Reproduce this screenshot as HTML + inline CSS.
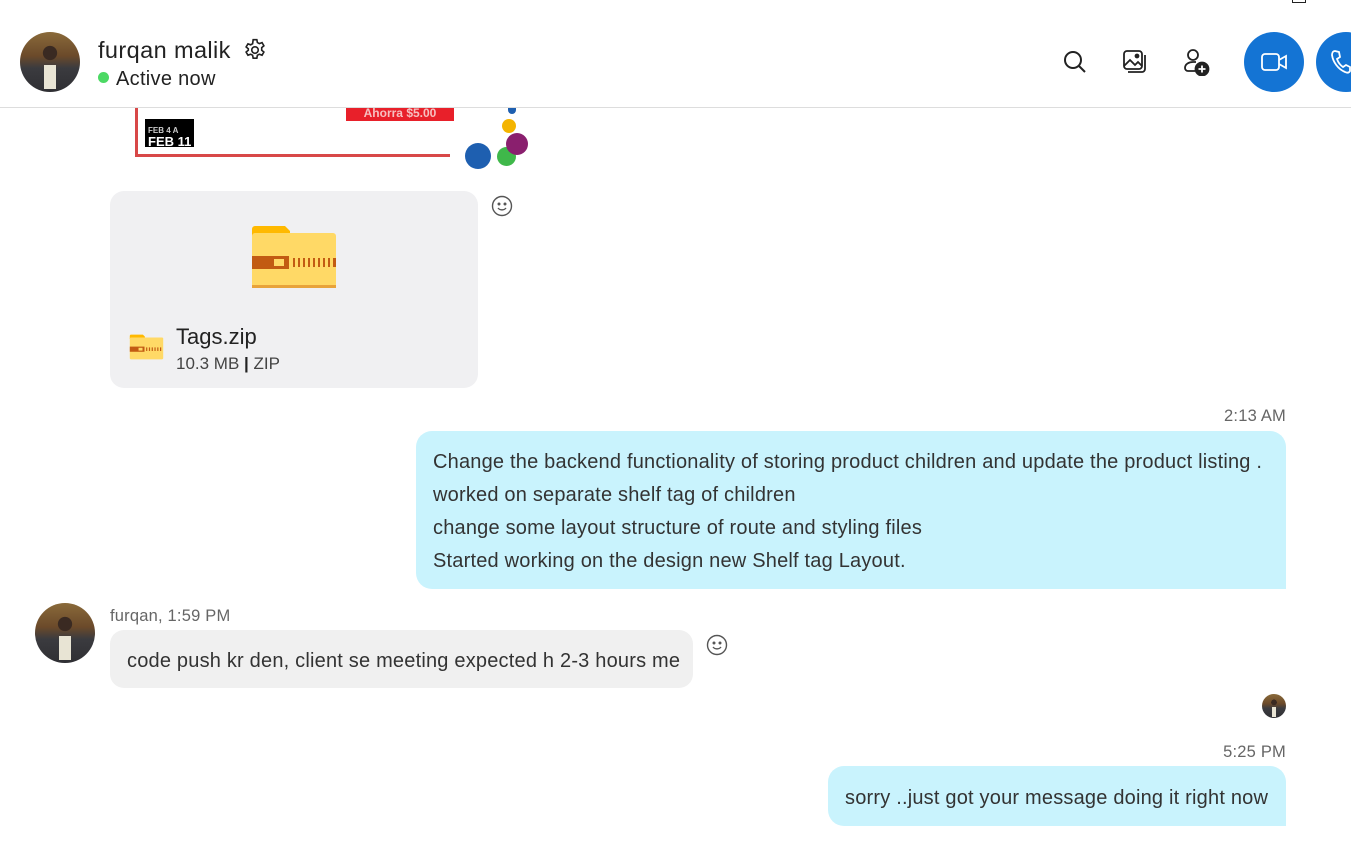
<!DOCTYPE html>
<html><head><meta charset="utf-8"><style>
*{margin:0;padding:0;box-sizing:border-box}
body{width:1351px;height:842px;overflow:hidden;background:#fff;font-family:"Liberation Sans",sans-serif;color:#242424;position:relative}
.abs{position:absolute}
.av{border-radius:50%;background:radial-gradient(circle at 50% 35%,#3a2a22 0 14%,transparent 15%),linear-gradient(180deg,#8a6a3a 0%,#6b4a2a 40%,#3b3b3f 60%,#2f2f33 100%);overflow:hidden}
.av:after{content:"";position:absolute;left:40%;top:55%;width:20%;height:40%;background:#e8e4d4}
.bub{position:absolute;font-size:20px;letter-spacing:.2px;line-height:33px;color:#333}
.time{position:absolute;font-size:16.5px;color:#666;letter-spacing:.2px}
.ib{position:absolute;width:60px;height:60px;border-radius:50%;background:#1474d4}
</style></head><body>
<div class="abs" style="left:1292px;top:-4px;width:14px;height:7px;border:1px solid #222"></div>
<div class="abs av" style="left:20px;top:32px;width:60px;height:60px"></div>
<div class="abs" style="left:98px;top:37px;font-size:23.5px;letter-spacing:.4px;color:#222">furqan malik</div>
<svg class="abs" style="left:242px;top:37px" width="26" height="26" viewBox="0 0 24 24" fill="none" stroke="#222" stroke-width="1.5"><circle cx="12" cy="12" r="3"/><path d="M10.3 2.5h3.4l.5 2.6 1.8 1 2.5-.9 1.7 2.9-2 1.7v2.4l2 1.7-1.7 2.9-2.5-.9-1.8 1-.5 2.6h-3.4l-.5-2.6-1.8-1-2.5.9-1.7-2.9 2-1.7V10.9l-2-1.7 1.7-2.9 2.5.9 1.8-1z"/></svg>
<div class="abs" style="left:98px;top:72px;width:11px;height:11px;border-radius:50%;background:#4cd964"></div>
<div class="abs" style="left:116px;top:68px;font-size:20px;letter-spacing:.3px;color:#222">Active now</div>
<svg class="abs" style="left:1062px;top:49px" width="26" height="26" viewBox="0 0 26 26" fill="none" stroke="#222" stroke-width="2"><circle cx="11" cy="11" r="8"/><path d="M17 17l6 6"/></svg>
<svg class="abs" style="left:1122px;top:49px" width="26" height="26" viewBox="0 0 26 26" fill="none" stroke="#222" stroke-width="1.8"><rect x="2" y="2" width="18" height="18" rx="3"/><path d="M2 17l6-6 5 5 3-3 4 4M23 6v14a3 3 0 0 1-3 3H6"/><circle cx="15" cy="7" r="1.5" fill="#222"/></svg>
<svg class="abs" style="left:1182px;top:48px" width="30" height="28" viewBox="0 0 30 28" fill="none" stroke="#222" stroke-width="1.8"><circle cx="11" cy="7" r="5"/><path d="M13 23H6a3 3 0 0 1-3-3c0-4 4-6 8-6h3"/><circle cx="20" cy="21" r="6.5" fill="#222"/><path d="M20 17.5v7M16.5 21h7" stroke="#fff"/></svg>
<div class="ib" style="left:1244px;top:32px"><svg style="position:absolute;left:17px;top:20px" width="27" height="20" viewBox="0 0 27 20" fill="none" stroke="#fff" stroke-width="1.8"><rect x="1" y="2" width="17" height="16" rx="3"/><path d="M18 8l7-4v12l-7-4"/></svg></div>
<div class="ib" style="left:1316px;top:32px"><svg style="position:absolute;left:14px;top:17px" width="24" height="26" viewBox="0 0 24 26" fill="none" stroke="#fff" stroke-width="1.8"><path d="M5 2l4 1 1 5-3 2c1 3 3 6 6 8l3-2 4 2v4c-1 2-3 2-5 1C8 20 3 13 2 6c0-2 1-4 3-4z"/></svg></div>
<div class="abs" style="left:0;top:107px;width:1351px;height:1px;background:#ddd"></div>
<div class="abs" style="left:135px;top:108px;width:3px;height:49px;background:#d84848"></div>
<div class="abs" style="left:135px;top:154px;width:315px;height:3px;background:#d84848"></div>
<div class="abs" style="left:346px;top:108px;width:108px;height:13px;background:#e8202a;color:#f6c0c0;font-size:12px;font-weight:bold;text-align:center;line-height:10px;overflow:hidden">Ahorra $5.00</div>
<div class="abs" style="left:145px;top:119px;width:49px;height:28px;background:#000;color:#fff;font-size:13px;font-weight:bold;line-height:11px;padding:4px 0 0 3px"><span style="font-size:8px;color:#ccc">FEB 4 A</span><br>FEB 11</div>
<div class="abs" style="left:508px;top:108px;width:8px;height:6px;border-radius:0 0 4px 4px;background:#1e5fb0"></div>
<div class="abs" style="left:502px;top:119px;width:14px;height:14px;border-radius:50%;background:#f4b400"></div>
<div class="abs" style="left:465px;top:143px;width:26px;height:26px;border-radius:50%;background:#1e5fb0"></div>
<div class="abs" style="left:497px;top:147px;width:19px;height:19px;border-radius:50%;background:#3fb84a"></div>
<div class="abs" style="left:506px;top:133px;width:22px;height:22px;border-radius:50%;background:#8a1f6e"></div>
<div class="abs" style="left:110px;top:191px;width:368px;height:197px;border-radius:14px;background:#f0f0f2"></div>
<svg class="abs" style="left:250px;top:225px" width="88" height="64" viewBox="0 0 88 64"><path d="M2 4a3 3 0 0 1 3-3h30l5 5v6H2z" fill="#ffb900"/><rect x="2" y="8" width="84" height="55" rx="3" fill="#ffd966"/><rect x="2" y="60" width="84" height="3" fill="#e8a33a"/><rect x="2" y="31" width="37" height="13" fill="#c25b12"/><rect x="24" y="34" width="10" height="7" fill="#ffd966"/><g fill="#c25b12"><rect x="43" y="33" width="2" height="9"/><rect x="48" y="33" width="2" height="9"/><rect x="53" y="33" width="2" height="9"/><rect x="58" y="33" width="2" height="9"/><rect x="63" y="33" width="2" height="9"/><rect x="68" y="33" width="2" height="9"/><rect x="73" y="33" width="2" height="9"/><rect x="78" y="33" width="2" height="9"/><rect x="83" y="33" width="3" height="9"/></g></svg>
<svg class="abs" style="left:129px;top:334px" width="35" height="26" viewBox="0 0 88 64"><path d="M2 4a3 3 0 0 1 3-3h30l5 5v6H2z" fill="#ffb900"/><rect x="2" y="8" width="84" height="55" rx="3" fill="#ffd966"/><rect x="2" y="31" width="37" height="13" fill="#c25b12"/><rect x="24" y="34" width="10" height="7" fill="#ffd966"/><g fill="#c25b12"><rect x="43" y="33" width="3" height="9"/><rect x="50" y="33" width="3" height="9"/><rect x="57" y="33" width="3" height="9"/><rect x="64" y="33" width="3" height="9"/><rect x="71" y="33" width="3" height="9"/><rect x="78" y="33" width="3" height="9"/></g></svg>
<div class="abs" style="left:176px;top:324px;font-size:22px;color:#222">Tags.zip</div>
<div class="abs" style="left:176px;top:354px;font-size:17px;color:#444">10.3 MB <b style="color:#222">|</b> ZIP</div>
<svg class="abs" style="left:491px;top:195px" width="22" height="22" viewBox="0 0 22 22" fill="none" stroke="#555" stroke-width="1.4"><circle cx="11" cy="11" r="9.5"/><circle cx="8" cy="9" r=".8" fill="#555"/><circle cx="14" cy="9" r=".8" fill="#555"/><path d="M7 13c2 2.5 6 2.5 8 0"/></svg>
<div class="time" style="right:65px;top:407px">2:13 AM</div>
<div class="bub" style="left:416px;top:431px;width:870px;height:158px;background:#c9f3fd;border-radius:16px 16px 0 16px;padding:15px 0 0 17px">Change the backend functionality of storing product children and update the product listing .<br>worked on separate shelf tag of children<br>change some layout structure of route and styling files<br>Started working on the design new Shelf tag Layout.</div>
<div class="abs av" style="left:35px;top:603px;width:60px;height:60px"></div>
<div class="time" style="left:110px;top:607px">furqan, 1:59 PM</div>
<div class="bub" style="left:110px;top:630px;width:583px;height:58px;background:#f0f0f0;border-radius:14px;padding:18px 0 0 17px;line-height:26px">code push kr den, client se meeting expected h 2-3 hours me</div>
<svg class="abs" style="left:706px;top:634px" width="22" height="22" viewBox="0 0 22 22" fill="none" stroke="#555" stroke-width="1.4"><circle cx="11" cy="11" r="9.5"/><circle cx="8" cy="9" r=".8" fill="#555"/><circle cx="14" cy="9" r=".8" fill="#555"/><path d="M7 13c2 2.5 6 2.5 8 0"/></svg>
<div class="abs av" style="left:1262px;top:694px;width:24px;height:24px"></div>
<div class="time" style="right:65px;top:743px">5:25 PM</div>
<div class="bub" style="left:828px;top:766px;width:458px;height:60px;background:#c9f3fd;border-radius:16px 16px 0 16px;padding:19px 0 0 17px;line-height:26px">sorry ..just got your message doing it right now</div>
</body></html>
